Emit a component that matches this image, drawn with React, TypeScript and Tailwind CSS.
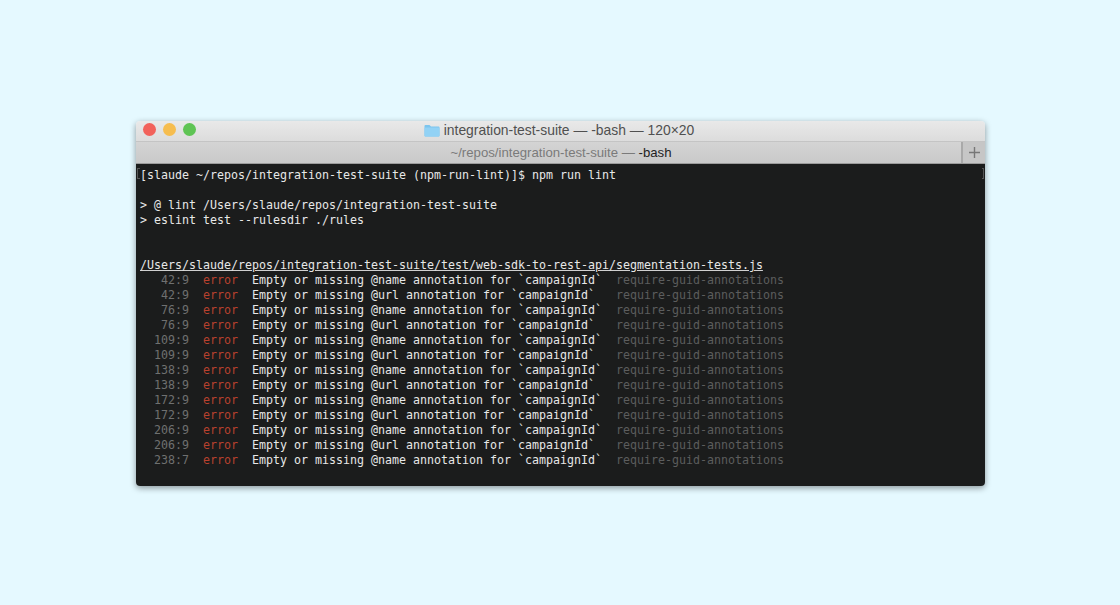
const errors: [string, string][] = [
  ["42:9", "@name"],
  ["42:9", "@url"],
  ["76:9", "@name"],
  ["76:9", "@url"],
  ["109:9", "@name"],
  ["109:9", "@url"],
  ["138:9", "@name"],
  ["138:9", "@url"],
  ["172:9", "@name"],
  ["172:9", "@url"],
  ["206:9", "@name"],
  ["206:9", "@url"],
  ["238:7", "@name"],
];

function Line({ children }: { children?: React.ReactNode }) {
  return <div className="h-[15px] leading-[15px] whitespace-pre">{children ?? " "}</div>;
}

function Light({ color }: { color: string }) {
  return <div className={`w-[13px] h-[13px] rounded-full ${color}`} />;
}

export default function App() {
  return (
    <div className="w-[1120px] h-[605px] bg-[#e5f9ff] pt-[121px] pl-[136px] overflow-hidden">
      <div className="w-[849px] h-[365px] flex flex-col rounded-[4px] overflow-hidden shadow-[0_2px_6px_rgba(0,0,0,0.4)]">
        <div className="h-[20px] shrink-0 relative flex items-center justify-center pb-[2px] bg-gradient-to-b from-[#e9e9e9] to-[#dcdcdc]">
          <div className="absolute left-[7px] top-[2px] flex gap-[7px]">
            <Light color="bg-[#f2625b]" />
            <Light color="bg-[#f6bd4f]" />
            <Light color="bg-[#5fc454]" />
          </div>
          <div className="flex items-center gap-[4px] mr-[3px] text-[13.9px] text-[#505050] font-['Liberation_Sans',sans-serif]">
            <svg width="16" height="13" viewBox="0 0 16 13">
              <path d="M0.5 2 Q0.5 1 1.5 1 H5.5 L7 2.5 H14.5 Q15.5 2.5 15.5 3.5 V11.5 Q15.5 12.5 14.5 12.5 H1.5 Q0.5 12.5 0.5 11.5 Z" fill="#7cc5ee" />
              <rect x="0.5" y="3.5" width="15" height="9" rx="1" fill="#92d2f5" />
            </svg>
            <span>integration-test-suite — -bash — 120×20</span>
          </div>
        </div>
        <div className="h-[23px] shrink-0 flex border-t border-t-[#c4c4c4] border-b border-b-[#9b9b9b] bg-gradient-to-b from-[#d4d4d4] to-[#c9c9c9]">
          <div className="flex-1 flex items-center justify-center pt-[1px] pl-[25px] text-[13.2px] text-[#7a7a7a] font-['Liberation_Sans',sans-serif]">
            <span>~/repos/integration-test-suite — <span className="text-[#222222]">-bash</span></span>
          </div>
          <div className="w-[24px] border-l-2 border-l-[#a9a9a9] flex items-center justify-center bg-[#c6c6c6]">
            <svg width="13" height="13" viewBox="0 0 13 13">
              <path d="M6.5 1 V12 M1 6.5 H12" stroke="#777777" strokeWidth="1.4" />
            </svg>
          </div>
        </div>
        <div className="flex-1 relative bg-[#1b1c1c] pt-[4px] pl-[4px] text-[11.63px] text-[#e8e8e8] font-['DejaVu_Sans_Mono',monospace]">
          <div className="absolute left-[1px] top-[4px] w-[3px] h-[11px] border border-r-0 border-[#555555]" />
          <div className="absolute right-[1px] top-[4px] w-[2px] h-[11px] border border-l-0 border-[#555555]" />
          <Line>[slaude ~/repos/integration-test-suite (npm-run-lint)]$ npm run lint</Line>
          <Line />
          <Line>{"> @ lint /Users/slaude/repos/integration-test-suite"}</Line>
          <Line>{"> eslint test --rulesdir ./rules"}</Line>
          <Line />
          <Line />
          <Line><span className="underline decoration-[#d0d0d0]">/Users/slaude/repos/integration-test-suite/test/web-sdk-to-rest-api/segmentation-tests.js</span></Line>
          {errors.map(([pos, tag], i) => (
            <Line key={i}>
              <span className="text-[#6f7070]">{pos.padStart(7, " ")}</span>
              {"  "}
              <span className="text-[#b8412e]">error</span>
              {"  "}
              {`Empty or missing ${tag} annotation for \`campaignId\``.padEnd(50, " ")}
              {"  "}
              <span className="text-[#5c5d5d]">require-guid-annotations</span>
            </Line>
          ))}
        </div>
      </div>
    </div>
  );
}
